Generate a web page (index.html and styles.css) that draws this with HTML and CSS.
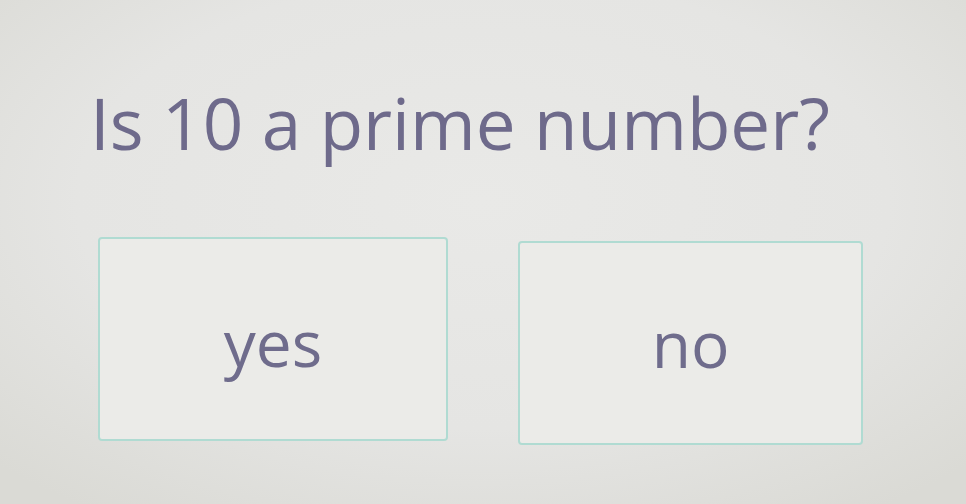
FILE: index.html
```html
<!DOCTYPE html>
<html lang="en">
<head>
<meta charset="utf-8">
<title>Quiz</title>
<link rel="stylesheet" href="styles.css">
</head>
<body>
<main class="quiz">
  <h1 class="question">Is 10 a prime number?</h1>
  <div class="choices">
    <button class="choice choice-yes" type="button">yes</button>
    <button class="choice choice-no" type="button">no</button>
  </div>
</main>
</body>
</html>
```
FILE: styles.css
```css
html, body {
  margin: 0;
  height: 100%;
}

body {
  background:
    radial-gradient(ellipse 70% 75% at 50% 40%, #e9e9e7 0%, #e5e5e3 60%, #dadad5 100%);
  font-family: "Open Sans", "DejaVu Sans", sans-serif;
  color: #6f6c8c;
  overflow: hidden;
}

.quiz {
  padding: 77px 0 0 90px;
}

.question {
  margin: 0;
  font-size: 71px;
  font-weight: 400;
  letter-spacing: 0;
  line-height: 92px;
  color: #6e6a8b;
}

.choices {
  display: flex;
  gap: 70px;
  margin-top: 68px;
  padding-left: 8px;
}

.choice {
  width: 350px;
  height: 204px;
  background: #ebebe8;
  border: 2px solid #b0dbd2;
  border-radius: 4px;
  font-family: inherit;
  font-size: 64px;
  color: #6f6c8c;
  padding: 6px 0 0;
}

.choice-no {
  width: 345px;
  margin-top: 4px;
  padding: 0;
}
```
